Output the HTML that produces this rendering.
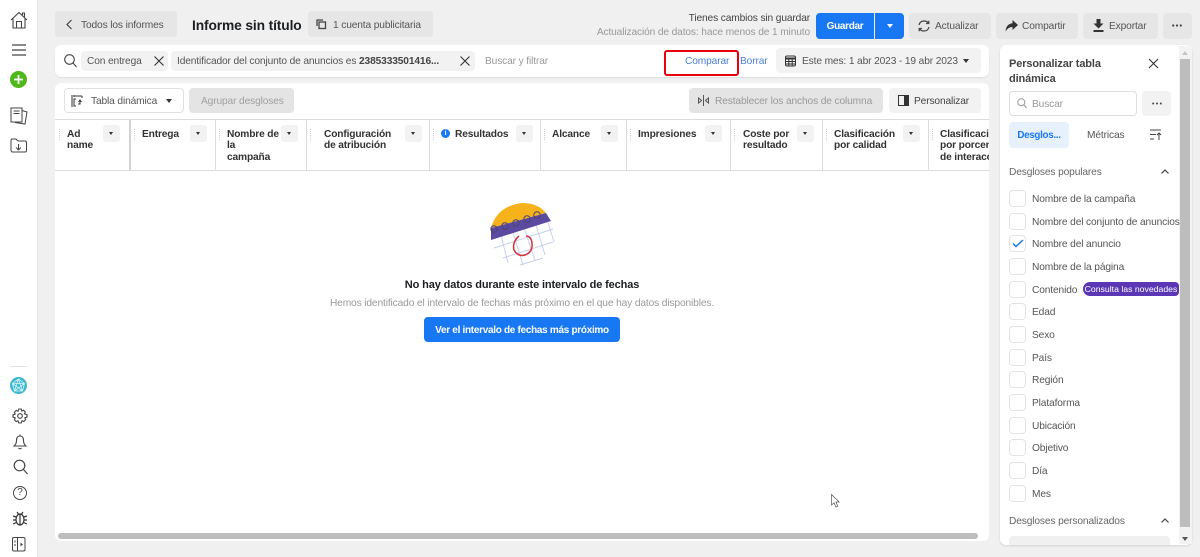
<!DOCTYPE html>
<html lang="es"><head><meta charset="utf-8"><title>Informe sin título</title>
<style>
*{box-sizing:border-box}
html,body{margin:0;padding:0}
body{width:1200px;height:557px;overflow:hidden;background:#f0f0f0;font-family:"Liberation Sans",sans-serif;font-size:10.2px;letter-spacing:-.13px;color:#444950;position:relative}
.a{position:absolute}
.t{position:absolute;white-space:nowrap;line-height:14px;margin-top:2px}
.btn{position:absolute;background:#e6e6e6;border-radius:4px}
.white{position:absolute;background:#fff;border-radius:6px}
.h{position:absolute;font-weight:bold;color:#333;line-height:11.5px;font-size:10.2px;letter-spacing:-.15px;white-space:nowrap}
.sep{position:absolute;top:120px;width:1px;height:50px;background:#dcdcdc}
.dd{position:absolute;top:125px;width:17px;height:17px;background:#f2f2f2;border-radius:3px}
.dd:after{content:"";position:absolute;left:6px;top:7px;border:2.5px solid transparent;border-top:3px solid #333;border-bottom:0}
.dots{position:absolute;top:129px;width:1px;height:11px;border-left:1.5px dotted #ccc}
.cb{position:absolute;left:1009px;width:17px;height:17px;border:1px solid #e3e3e3;border-radius:4px;background:#fff}
.l{position:absolute;left:1032px;white-space:nowrap;line-height:14px;color:#555;margin-top:2px}
svg{position:absolute;overflow:visible}
</style></head><body>

<div class="a" style="left:0;top:0;width:38px;height:557px;background:#fff;border-right:1px solid #e4e4e4"></div>
<svg style="left:10px;top:11px" width="18" height="18" viewBox="0 0 18 18" fill="none" stroke="#444" stroke-width="1.1"><path d="M1 9 9 1.500 17 9M3 7.500V17H15V7.500M6.500 17V10.500H11.500V17M12.500 4V2H14.500V6"/></svg>
<svg style="left:12px;top:44px" width="14" height="12" fill="none" stroke="#444" stroke-width="1.2"><path d="M0 1H14M0 6H14M0 11H14"/></svg>
<div class="a" style="left:10px;top:71px;width:17px;height:17px;border-radius:50%;background:#4fb81a"></div>
<svg style="left:10px;top:71px" width="17" height="17" fill="none" stroke="#fff" stroke-width="1.8"><path d="M8.500 4V13M4 8.500H13"/></svg>
<svg style="left:10px;top:107px" width="18" height="18" fill="none" stroke="#444" stroke-width="1"><path d="M1 1H12V15H1ZM12 3.500 17 5 15 17 5 15.500M3.500 4H9.500M3.500 6.500H9.500"/></svg>
<svg style="left:10px;top:138px" width="17" height="15" fill="none" stroke="#444" stroke-width="1"><path d="M1 12V2.500Q1 1 2.500 1H6L8 3H15Q16.500 3 16.500 4.500V12.500Q16.500 14 15 14H2.500Q1 14 1 12ZM8.500 6V11.500M6 9.500 8.500 12 11 9.500"/></svg>
<div class="a" style="left:10px;top:366px;width:17px;height:1px;background:#e2e2e2"></div>
<div class="a" style="left:10px;top:377px;width:17px;height:17px;border-radius:50%;background:#3cb9d0"></div>
<svg style="left:10px;top:377px" width="17" height="17" fill="none" stroke="#d9f4f8" stroke-width=".8"><path d="M8.500 2 14.500 6.500 12.500 14 4.500 14 2.500 6.500ZM8.500 2 12.500 14M8.500 2 4.500 14M2.500 6.500 14.500 6.500M4.500 14 14.500 6.500M12.500 14 2.500 6.500"/></svg>
<svg style="left:12px;top:408px" width="16" height="16" viewBox="0 0 16 16" fill="none" stroke="#444" stroke-width="1.1"><circle cx="8" cy="8" r="2.300"/><path d="M6.800 1H9.200L9.700 3 11.500 2.200 13.300 4 12.500 5.800 15 6.800V9.200L12.800 9.900 13.600 11.700 11.900 13.500 10 12.700 9.200 15H6.800L6 12.800 4.200 13.600 2.400 11.900 3.200 10 1 9.200V6.800L3.200 6 2.400 4.200 4.200 2.400 6 3.200Z"/></svg>
<svg style="left:13px;top:434px" width="14" height="16" fill="none" stroke="#444" stroke-width="1.1"><path d="M1 12Q3.500 10 3.500 6.500Q3.500 2 7 2Q10.500 2 10.500 6.500Q10.500 10 13 12ZM5.500 14Q7 15.500 8.500 14M7 .5V2"/></svg>
<svg style="left:13px;top:459px" width="15" height="16" fill="none" stroke="#444" stroke-width="1.2"><circle cx="6.500" cy="6.500" r="5.300"/><path d="M10.500 10.500 14.500 15"/></svg>
<div class="a" style="left:13px;top:486px;width:14px;height:14px;border:1.1px solid #444;border-radius:50%;font-size:10px;line-height:12px;text-align:center;color:#444">?</div>
<svg style="left:13px;top:510px" width="14" height="16" fill="none" stroke="#333" stroke-width="1.2"><ellipse cx="7" cy="9.500" rx="4" ry="5.500"/><path d="M7 4V15M4 2 5.500 4M10 2 8.500 4M0 6 3 7M14 6 11 7M0 10H3M14 10H11M0 14 3.500 12.500M14 14 10.500 12.500"/></svg>
<svg style="left:12px;top:537px" width="14" height="15" fill="none" stroke="#444" stroke-width="1"><rect x=".5" y=".5" width="12.500" height="13.500" rx="1.500"/><path d="M5.500 .5V14"/><path d="M8.500 5.500 11 7.500 8.500 9.500Z" fill="#444" stroke="none"/><path d="M3 3.500V5.500M3 7V9" /></svg>

<div class="btn" style="left:55px;top:11px;width:122px;height:26px"></div>
<svg style="left:66px;top:19px" width="7" height="11" fill="none" stroke="#444" stroke-width="1.2"><path d="M5.500 1 1 5.500 5.500 10"/></svg>
<div class="t" style="left:81px;top:17px;color:#555">Todos los informes</div>
<div class="t" style="left:192px;top:17px;font-size:13.8px;font-weight:bold;color:#1c1e21">Informe sin título</div>
<div class="btn" style="left:308px;top:11px;width:125px;height:26px"></div>
<svg style="left:316px;top:19px" width="12" height="11" fill="none" stroke="#444" stroke-width="1.300"><rect x="3" y="3" width="6.500" height="6.500"/><path d="M1 7V1H7"/></svg>
<div class="t" style="left:333px;top:17px;color:#555">1 cuenta publicitaria</div>
<div class="t" style="right:390px;top:10px;color:#444">Tienes cambios sin guardar</div>
<div class="t" style="right:390px;top:24px;color:#999">Actualización de datos: hace menos de 1 minuto</div>

<div class="a" style="left:816px;top:12.500px;width:58px;height:26px;background:#1877f2;border-radius:4px 0 0 4px;color:#fff;font-weight:bold;font-size:10px;letter-spacing:-.3px;text-align:center;line-height:28px">Guardar</div>
<div class="a" style="left:875px;top:12.500px;width:29px;height:26px;background:#1877f2;border-radius:0 4px 4px 0"></div>
<div class="a" style="left:887px;top:24px;border:3.500px solid transparent;border-top:4px solid #fff;border-bottom:0"></div>
<div class="btn" style="left:909px;top:12.500px;width:82px;height:26px"></div>
<svg style="left:918px;top:20px" width="12" height="12" fill="none" stroke="#444" stroke-width="1.200"><path d="M1 5Q2 1 6 1Q9 1 10.500 3M11 7Q10 11 6 11Q3 11 1.500 9M10.800 .8V3.500H8M1.200 11.200V8.500H4"/></svg>
<div class="t" style="left:935px;top:18px;color:#555">Actualizar</div>
<div class="btn" style="left:996px;top:12.500px;width:82px;height:26px"></div>
<svg style="left:1005px;top:20px" width="13" height="12"><path d="M7.500 0 13 5 7.500 10V7Q3 7 .5 11.500Q1 4 7.500 3.200Z" fill="#333"/></svg>
<div class="t" style="left:1022px;top:18px;color:#555">Compartir</div>
<div class="btn" style="left:1083px;top:12.500px;width:75px;height:26px"></div>
<svg style="left:1093px;top:19px" width="11" height="14"><path d="M3.500 0H7.500V4.500H10.500L5.500 9.500 .5 4.500H3.500ZM.5 11H10.500V13H.5Z" fill="#333"/></svg>
<div class="t" style="left:1109px;top:18px;color:#555">Exportar</div>
<div class="btn" style="left:1163px;top:12.500px;width:29px;height:26px"></div>
<svg style="left:1172px;top:24px" width="10" height="3" fill="#444"><circle cx="1.200" cy="1.500" r="1.100"/><circle cx="5" cy="1.500" r="1.100"/><circle cx="8.800" cy="1.500" r="1.100"/></svg>

<div class="white" style="left:55px;top:45px;width:934px;height:32px;box-shadow:0 1px 1px rgba(0,0,0,.08)"></div>
<svg style="left:64px;top:54px" width="13" height="14" fill="none" stroke="#444" stroke-width="1.100"><circle cx="5.500" cy="5.500" r="4.800"/><path d="M9 9 12.500 13"/></svg>
<div class="a" style="left:81px;top:51px;width:87px;height:20px;background:#f2f2f2;border-radius:4px"></div>
<div class="t" style="left:87px;top:53px;color:#555">Con entrega</div>
<svg style="left:154px;top:56px" width="10" height="10" fill="none" stroke="#333" stroke-width="1.100"><path d="M.5 .5 9.500 9.500M9.500 .5 .5 9.500"/></svg>
<div class="a" style="left:171px;top:51px;width:304px;height:20px;background:#f2f2f2;border-radius:4px"></div>
<div class="t" style="left:177px;top:53px;color:#555">Identificador del conjunto de anuncios es <b style="color:#444">2385333501416...</b></div>
<svg style="left:460px;top:56px" width="10" height="10" fill="none" stroke="#333" stroke-width="1.100"><path d="M.5 .5 9.500 9.500M9.500 .5 .5 9.500"/></svg>
<div class="t" style="left:485px;top:53px;color:#999">Buscar y filtrar</div>
<div class="t" style="left:685px;top:53px;color:#4a7fd6">Comparar</div>
<div class="a" style="left:664px;top:50px;width:75px;height:26px;border:2.500px solid #e8000d;border-radius:3px"></div>
<div class="t" style="left:740px;top:53px;color:#4a7fd6">Borrar</div>
<div class="a" style="left:776px;top:48px;width:205px;height:25px;background:#f2f2f2;border-radius:4px"></div>
<svg style="left:785px;top:55px" width="11" height="12" fill="none" stroke="#333" stroke-width="1"><rect x=".5" y="1" width="10" height="10" rx="1.500"/><path d="M.5 3.500H10.500" stroke-width="2"/><path d="M.5 6.500H10.500M.5 9H10.500M3.800 3V11M7.200 3V11"/></svg>
<div class="t" style="left:802px;top:53px;color:#555">Este mes: 1 abr 2023 - 19 abr 2023</div>
<div class="a" style="left:963px;top:59px;border:3.500px solid transparent;border-top:4px solid #333;border-bottom:0"></div>

<div class="white" style="left:55px;top:83px;width:934px;height:458px;overflow:hidden"></div>
<div class="a" style="left:64px;top:88px;width:120px;height:25px;background:#fff;border:1px solid #e0e0e0;border-radius:4px"></div>
<svg style="left:71px;top:95px" width="12" height="12" fill="none" stroke="#333" stroke-width="1"><path d="M1 0V12M3 1H11M3 0V2M11 1V3M5 11H3V4H5M7 9H9V5M7.500 7 9 5 10.500 7"/></svg>
<div class="t" style="left:91px;top:93px;color:#555">Tabla dinámica</div>
<div class="a" style="left:166px;top:99px;border:3.500px solid transparent;border-top:4px solid #333;border-bottom:0"></div>
<div class="btn" style="left:189px;top:88px;width:105px;height:25px;background:#e4e4e4"></div>
<div class="t" style="left:201px;top:93px;color:#a0a0a0">Agrupar desgloses</div>
<div class="btn" style="left:689px;top:88px;width:194px;height:25px;background:#e4e4e4"></div>
<svg style="left:698px;top:95px" width="11" height="11" fill="none" stroke="#555" stroke-width="1"><path d="M5.500 0V11M.5 3V8L3.500 5.500ZM10.500 3V8L7.500 5.500Z"/></svg>
<div class="t" style="left:715px;top:93px;color:#999">Restablecer los anchos de columna</div>
<div class="btn" style="left:889px;top:88px;width:92px;height:25px;background:#f2f2f2"></div>
<svg style="left:898px;top:95px" width="11" height="11"><rect x=".5" y=".5" width="10" height="10" fill="none" stroke="#333"/><rect x="6" y="0" width="5" height="11" fill="#333"/></svg>
<div class="t" style="left:914px;top:93px;color:#444">Personalizar</div>

<div class="a" style="left:55px;top:119px;width:934px;height:1px;background:#dcdcdc"></div>
<div class="a" style="left:55px;top:170px;width:934px;height:1px;background:#dcdcdc"></div>
<div class="a" style="left:129px;top:120px;width:2px;height:50px;background:#d4d4d4"></div>
<div class="sep" style="left:215px"></div><div class="sep" style="left:306px"></div><div class="sep" style="left:429px"></div><div class="sep" style="left:540px"></div><div class="sep" style="left:626px"></div><div class="sep" style="left:730px"></div><div class="sep" style="left:822px"></div><div class="sep" style="left:928px"></div>
<div class="dots" style="left:59px"></div><div class="dots" style="left:134px"></div><div class="dots" style="left:219px"></div><div class="dots" style="left:310px"></div><div class="dots" style="left:433px"></div><div class="dots" style="left:544px"></div><div class="dots" style="left:630px"></div><div class="dots" style="left:734px"></div><div class="dots" style="left:826px"></div><div class="dots" style="left:932px"></div>
<div class="h" style="left:67px;top:128.500px">Ad<br>name</div>
<div class="dd" style="left:103px"></div>
<div class="h" style="left:142px;top:128.500px">Entrega</div>
<div class="dd" style="left:190px"></div>
<div class="h" style="left:227px;top:128.500px">Nombre de<br>la<br>campaña</div>
<div class="dd" style="left:281px"></div>
<div class="h" style="left:324px;top:128.500px">Configuración<br>de atribución</div>
<div class="dd" style="left:405px"></div>
<div class="a" style="left:441px;top:129px;width:9px;height:9px;border-radius:50%;background:#1877f2;color:#fff;font-size:7px;font-weight:bold;line-height:9px;text-align:center">i</div>
<div class="h" style="left:455px;top:128.500px">Resultados</div>
<div class="dd" style="left:516px"></div>
<div class="h" style="left:552px;top:128.500px">Alcance</div>
<div class="dd" style="left:601px"></div>
<div class="h" style="left:638px;top:128.500px">Impresiones</div>
<div class="dd" style="left:705px"></div>
<div class="h" style="left:743px;top:128.500px">Coste por<br>resultado</div>
<div class="dd" style="left:797px"></div>
<div class="h" style="left:834px;top:128.500px">Clasificación<br>por calidad</div>
<div class="dd" style="left:903px"></div>
<div class="a" style="left:940px;top:120px;width:49px;height:50px;overflow:hidden"><div class="h" style="left:0;top:8.500px">Clasificación<br>por porcentaje<br>de interacción</div></div>

<svg style="left:460px;top:190px" width="120" height="90" viewBox="460 190 120 90">
<g fill="none" stroke="#c7d1ee" stroke-width="1"><path d="M494 248 553 229M503 258 553 242M520 265 543 258M501 235 508 263M513 232 523 265M524 228 535 260M536 225 545 255M548 222 554 242"/></g>
<path d="M491 228Q497 206 522 203Q538 203 546 213Z" fill="#f6b21b"/>
<path d="M491 228 546 213 551 221 491 240Z" fill="#5b4a9f"/>
<g fill="none" stroke="#4a4470" stroke-width="1"><circle cx="494" cy="229" r="3.200"/><circle cx="505" cy="226" r="3.200"/><circle cx="516" cy="223" r="3.200"/><circle cx="527" cy="219" r="3.200"/><circle cx="537" cy="215" r="3.200"/></g>
<path d="M519 236Q512 242 514 250Q518 257 525 255Q533 252 532 243Q531 236 526 236" fill="none" stroke="#d6333a" stroke-width="1.500"/>
</svg>
<div class="t" style="left:55px;width:934px;text-align:center;top:276px;font-weight:bold;font-size:11px;color:#1c1e21">No hay datos durante este intervalo de fechas</div>
<div class="t" style="left:55px;width:934px;text-align:center;top:295px;color:#999">Hemos identificado el intervalo de fechas más próximo en el que hay datos disponibles.</div>
<div class="a" style="left:424px;top:317px;width:196px;height:25px;background:#1877f2;border-radius:4px;color:#fff;font-weight:bold;font-size:10px;letter-spacing:-.3px;text-align:center;line-height:27px">Ver el intervalo de fechas más próximo</div>
<div class="a" style="left:58px;top:533px;width:920px;height:6px;background:#bdbdbd;border-radius:3px"></div>
<svg style="left:831px;top:494px" width="9" height="14"><path d="M.5 .5V11L3 8.800 5 13 6.800 12.200 5 8H8.200Z" fill="#fff" stroke="#555" stroke-width=".7"/></svg>

<div class="white" style="left:1000px;top:45px;width:192px;height:500px;box-shadow:0 1px 2px rgba(0,0,0,.12);overflow:hidden"></div>
<div class="a" style="left:1179px;top:46px;width:13px;height:498px;background:#f3f3f3"></div>
<div class="a" style="left:1180px;top:59px;width:10px;height:468px;background:#bdbdbd"></div>
<div class="a" style="left:1182px;top:51px;border:3px solid transparent;border-bottom:4px solid #c4c4c4;border-top:0"></div>
<div class="a" style="left:1182px;top:537px;border:3px solid transparent;border-top:4px solid #555;border-bottom:0"></div>
<div class="t" style="left:1009px;top:55px;font-weight:bold;font-size:11px;line-height:14.500px;color:#444">Personalizar tabla<br>dinámica</div>
<svg style="left:1149px;top:59px" width="9" height="9" fill="none" stroke="#333" stroke-width="1.100"><path d="M0 0 9 9M9 0 0 9"/></svg>
<div class="a" style="left:1009px;top:91px;width:128px;height:25px;border:1px solid #dadde1;border-radius:4px;background:#fff"></div>
<svg style="left:1017px;top:98px" width="10" height="11" fill="none" stroke="#999" stroke-width="1"><circle cx="4.300" cy="4.300" r="3.500"/><path d="M7 7 9.500 10"/></svg>
<div class="t" style="left:1032px;top:96px;color:#999">Buscar</div>
<div class="btn" style="left:1142px;top:91px;width:29px;height:25px;background:#f2f2f2"></div>
<svg style="left:1152px;top:102px" width="10" height="3" fill="#444"><circle cx="1.200" cy="1.500" r="1"/><circle cx="5" cy="1.500" r="1"/><circle cx="8.800" cy="1.500" r="1"/></svg>
<div class="a" style="left:1009px;top:122px;width:60px;height:26px;background:#e7f1fd;border-radius:4px;color:#1877f2;font-weight:bold;font-size:9.800px;letter-spacing:-.3px;text-align:center;line-height:28px">Desglos...</div>
<div class="t" style="left:1087px;top:127px;color:#555">Métricas</div>
<svg style="left:1150px;top:129px" width="12" height="12" fill="none" stroke="#444" stroke-width="1"><path d="M0 1H11M0 5.500H6M0 10H4M9 11V4M7 6 9 4 11 6"/></svg>
<div class="t" style="left:1009px;top:164px;color:#666">Desgloses populares</div>
<svg style="left:1161px;top:169px" width="8" height="5" fill="none" stroke="#444" stroke-width="1.200"><path d="M.5 4.500 4 1 7.500 4.500"/></svg>

<div class="cb" style="top:190px"></div><div class="l" style="top:191px">Nombre de la campaña</div>
<div class="cb" style="top:213px"></div><div class="l" style="top:214px">Nombre del conjunto de anuncios</div>
<div class="cb" style="top:235px"></div><div class="l" style="top:236px">Nombre del anuncio</div>
<svg style="left:1012px;top:239px" width="12" height="9" fill="none" stroke="#1877f2" stroke-width="1.500"><path d="M1 4.500 4 7.500 11 1"/></svg>
<div class="cb" style="top:258px"></div><div class="l" style="top:259px">Nombre de la página</div>
<div class="cb" style="top:281px"></div><div class="l" style="top:282px">Contenido</div>
<div class="a" style="left:1083px;top:282px;width:96px;height:14px;background:#5b36b5;border-radius:7px 4px 4px 7px;color:#fff;font-size:8.700px;letter-spacing:0;line-height:14px;text-align:center;white-space:nowrap">Consulta las novedades</div>
<div class="cb" style="top:303px"></div><div class="l" style="top:304px">Edad</div>
<div class="cb" style="top:326px"></div><div class="l" style="top:327px">Sexo</div>
<div class="cb" style="top:349px"></div><div class="l" style="top:350px">País</div>
<div class="cb" style="top:371px"></div><div class="l" style="top:372px">Región</div>
<div class="cb" style="top:394px"></div><div class="l" style="top:395px">Plataforma</div>
<div class="cb" style="top:417px"></div><div class="l" style="top:418px">Ubicación</div>
<div class="cb" style="top:439px"></div><div class="l" style="top:440px">Objetivo</div>
<div class="cb" style="top:462px"></div><div class="l" style="top:463px">Día</div>
<div class="cb" style="top:485px"></div><div class="l" style="top:486px">Mes</div>
<div class="t" style="left:1009px;top:513px;color:#666">Desgloses personalizados</div>
<svg style="left:1161px;top:518px" width="8" height="5" fill="none" stroke="#444" stroke-width="1.200"><path d="M.5 4.500 4 1 7.500 4.500"/></svg>
<div class="a" style="left:1009px;top:536px;width:161px;height:9px;background:#f0f0f0;border-radius:4px 4px 0 0"></div>
</body></html>
